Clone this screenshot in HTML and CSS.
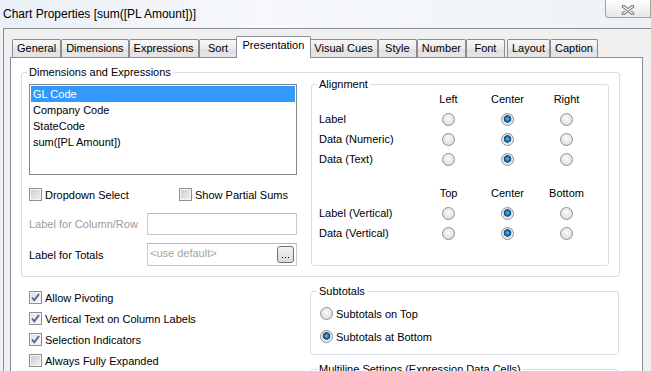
FILE: index.html
```html
<!DOCTYPE html>
<html lang="en">
<head>
    <meta charset="UTF-8">
    <meta name="viewport" content="width=device-width, initial-scale=1.0">
    <title>Chart Properties</title>
    <link rel="stylesheet" href="styles.css">
</head>
<body>

    <!-- Window title -->
    <div class="titlebar">
        <span class="title">Chart Properties [sum([PL Amount])]</span>
        <button class="close-btn" aria-label="Close">
            <svg width="14" height="10" viewBox="0 0 14 10">
                <path d="M2.5 1.5 L11.5 8.5 M11.5 1.5 L2.5 8.5" stroke="#6e6e6e" stroke-width="3.4" stroke-linecap="round"/>
                <path d="M2.5 1.5 L11.5 8.5 M11.5 1.5 L2.5 8.5" stroke="#fff" stroke-width="1.5" stroke-linecap="round"/>
            </svg>
        </button>
    </div>

    <div class="dialog">

        <ul class="tabs">
            <li class="tab">General</li>
            <li class="tab">Dimensions</li>
            <li class="tab">Expressions</li>
            <li class="tab">Sort</li>
            <li class="tab active">Presentation</li>
            <li class="tab">Visual Cues</li>
            <li class="tab">Style</li>
            <li class="tab">Number</li>
            <li class="tab">Font</li>
            <li class="tab tab-gap">Layout</li>
            <li class="tab">Caption</li>
        </ul>

        <div class="tab-panel">

            <!-- Dimensions and Expressions -->
            <fieldset class="group main-group">
                <legend>Dimensions and Expressions</legend>
                <div class="main-cols">
                    <div class="left-col">
                        <ul class="listbox">
                            <li class="selected">GL Code</li>
                            <li>Company Code</li>
                            <li>StateCode</li>
                            <li>sum([PL Amount])</li>
                        </ul>

                        <div class="check-row">
                            <label class="check wide"><span class="box"></span>Dropdown Select</label>
                            <label class="check"><span class="box"></span>Show Partial Sums</label>
                        </div>

                        <div class="field-row disabled">
                            <span class="field-label">Label for Column/Row</span>
                            <div class="textbox"></div>
                        </div>

                        <div class="field-row totals">
                            <span class="field-label">Label for Totals</span>
                            <div class="textbox">
                                <span class="placeholder">&lt;use default&gt;</span>
                                <span class="dots-btn"><i></i><i></i><i></i></span>
                            </div>
                        </div>
                    </div>

                    <fieldset class="group align-group">
                        <legend>Alignment</legend>
                        <div class="align-grid">
                            <span></span>
                            <span class="col-head">Left</span>
                            <span class="col-head">Center</span>
                            <span class="col-head">Right</span>

                            <span>Label</span>
                            <span class="radio"></span>
                            <span class="radio on"></span>
                            <span class="radio"></span>

                            <span>Data (Numeric)</span>
                            <span class="radio"></span>
                            <span class="radio on"></span>
                            <span class="radio"></span>

                            <span>Data (Text)</span>
                            <span class="radio"></span>
                            <span class="radio on"></span>
                            <span class="radio"></span>
                        </div>
                        <div class="align-grid">
                            <span></span>
                            <span class="col-head">Top</span>
                            <span class="col-head">Center</span>
                            <span class="col-head">Bottom</span>

                            <span>Label (Vertical)</span>
                            <span class="radio"></span>
                            <span class="radio on"></span>
                            <span class="radio"></span>

                            <span>Data (Vertical)</span>
                            <span class="radio"></span>
                            <span class="radio on"></span>
                            <span class="radio"></span>
                        </div>
                    </fieldset>
                </div>
            </fieldset>

            <div class="lower">
                <div class="options">
                    <label class="check"><span class="box checked"><svg width="11" height="11" viewBox="0 0 11 11"><path d="M2 5.5 L4.3 8.3 L9 2" fill="none" stroke="#4a5f93" stroke-width="1.8"/></svg></span>Allow Pivoting</label>
                    <label class="check"><span class="box checked"><svg width="11" height="11" viewBox="0 0 11 11"><path d="M2 5.5 L4.3 8.3 L9 2" fill="none" stroke="#4a5f93" stroke-width="1.8"/></svg></span>Vertical Text on Column Labels</label>
                    <label class="check"><span class="box checked"><svg width="11" height="11" viewBox="0 0 11 11"><path d="M2 5.5 L4.3 8.3 L9 2" fill="none" stroke="#4a5f93" stroke-width="1.8"/></svg></span>Selection Indicators</label>
                    <label class="check"><span class="box"></span>Always Fully Expanded</label>
                </div>

                <div class="lower-right">
                    <fieldset class="group subtotals">
                        <legend>Subtotals</legend>
                        <label class="radio-row"><span class="radio"></span>Subtotals on Top</label>
                        <label class="radio-row"><span class="radio on"></span>Subtotals at Bottom</label>
                    </fieldset>

                    <fieldset class="group multiline">
                        <legend>Multiline Settings (Expression Data Cells)</legend>
                    </fieldset>
                </div>
            </div>

        </div>
    </div>

</body>
</html>
```

FILE: styles.css
```css
* {
    box-sizing: border-box;
}
html, body {
    margin: 0;
    padding: 0;
}
body {
    width: 651px;
    height: 371px;
    overflow: hidden;
    background-color: #eef2f7;
    font-family: "Liberation Sans", Arial, sans-serif;
    font-size: 11px;
    color: #000;
}

/* title bar */
.titlebar {
    height: 28px;
    display: flex;
    align-items: flex-start;
    padding-left: 3px;
    background: linear-gradient(to right, #eaf0f7, #f6f8fb 40%, #eef2f8);
}
.title {
    font-size: 12px;
    line-height: 29px;
}
.close-btn {
    margin-left: auto;
    width: 46px;
    height: 18px;
    padding: 3px 0 0;
    border: 1px solid #a3a3a3;
    border-top: none;
    border-radius: 0 0 0 4px;
    background: linear-gradient(#fdfdfd, #e8e8e8);
    display: flex;
    justify-content: center;
    align-items: center;
}

/* dialog body */
.dialog {
    margin-left: 3px;
    height: 343px;
    border-left: 1px solid #8c8c8c;
    border-top: 1px solid #8c8c8c;
    background-color: #f0f0f0;
    padding: 7px 8px 0 6px;
}

/* tabs */
.tabs {
    list-style: none;
    margin: 0 0 0 2px;
    padding: 0;
    height: 21px;
    display: flex;
    align-items: flex-end;
    position: relative;
    z-index: 1;
}
.tab {
    height: 18px;
    min-width: 39px;
    padding: 0 4px;
    border: 1px solid #898c95;
    border-bottom: none;
    border-radius: 2px 2px 0 0;
    background: linear-gradient(#f7f7f7, #ececec 50%, #e0e0e0 51%, #e6e6e6);
    line-height: 17px;
    text-align: center;
    white-space: nowrap;
}
.tab.active {
    height: 22px;
    margin: 0 -2px -1px;
    padding: 0 6px;
    background: #fff;
    position: relative;
    z-index: 2;
}
.tab-gap {
    margin-left: 2px;
}
.tab-panel {
    height: 320px;
    border: 1px solid #898c95;
    background-color: #fff;
    padding: 0 22px 0 10px;
}

/* group boxes */
.group {
    margin: 0;
    padding: 0;
    min-width: 0;
    border: 1px solid #d5dfe5;
    border-radius: 3px;
}
.group legend {
    padding: 0 2px;
    margin-left: -2px;
    line-height: 13px;
}
.main-group {
    margin-top: 8px;
    padding: 0 9px 10px 7px;
}
.main-cols {
    display: flex;
    align-items: flex-start;
    gap: 14px;
}
.left-col {
    width: 268px;
    flex: none;
    margin-top: 5px;
}

/* list */
.listbox {
    list-style: none;
    margin: 0;
    height: 91px;
    padding: 1px;
    border: 1px solid #828790;
}
.listbox li {
    line-height: 16px;
    padding-left: 2px;
}
.listbox .selected {
    background-color: #3399ff;
    color: #fff;
}

/* checkboxes */
.check {
    display: flex;
    align-items: center;
    gap: 3px;
    white-space: nowrap;
}
.box {
    width: 13px;
    height: 13px;
    flex: none;
    border: 1px solid #8e8f8f;
    background: linear-gradient(135deg, #cbcbcb, #f1f1f1);
    box-shadow: inset 0 0 0 1px #f4f4f4;
    display: flex;
    align-items: center;
    justify-content: center;
}
.box.checked {
    background: linear-gradient(135deg, #dedede, #fafafa);
}
.check-row {
    display: flex;
    height: 13px;
    margin-top: 13px;
}
.check-row .wide {
    width: 150px;
}

/* text fields */
.field-row {
    display: flex;
    align-items: center;
    margin-top: 12px;
}
.field-label {
    width: 118px;
    flex: none;
}
.disabled .field-label {
    color: #9c9c9c;
}
.textbox {
    width: 150px;
    height: 22px;
    border: 1px solid #c9c9c9;
    border-top-color: #b8b8b8;
    display: flex;
    align-items: center;
    justify-content: space-between;
    padding: 0 2px 0 2px;
}
.totals {
    margin-top: 8px;
}
.totals .textbox {
    height: 23px;
}
.placeholder {
    color: #a3a3a3;
    margin-top: -3px;
}
.dots-btn {
    width: 17px;
    height: 17px;
    border: 1px solid #707070;
    border-radius: 3px;
    background: linear-gradient(#f4f4f4, #dadada);
    display: flex;
    justify-content: center;
    align-items: flex-end;
    gap: 2px;
    padding-bottom: 4px;
}
.dots-btn i {
    width: 1px;
    height: 1px;
    background: #000;
}

/* alignment */
.align-group {
    width: 298px;
    flex: none;
    margin-top: -1px;
    padding: 0 0 22px 7px;
}
.align-grid {
    display: grid;
    grid-template-columns: 100px repeat(3, 59px);
    grid-auto-rows: 20px;
    align-items: center;
    margin-top: -2px;
}
.align-grid + .align-grid {
    margin-top: 14px;
}
.col-head {
    text-align: center;
}
.align-grid .radio {
    justify-self: center;
}

/* radios */
.radio {
    width: 13px;
    height: 13px;
    flex: none;
    border-radius: 50%;
    border: 1px solid #8f9091;
    background: radial-gradient(circle at 50% 40%, #fbfbfb, #e4e4e4 60%, #d2d2d2);
}
.radio.on {
    background: radial-gradient(circle at 50% 45%, #7cc8f2 0, #2b83c3 1.6px, #11497c 3.4px, #dcdcdc 4.1px, #f3f3f3 5.5px);
}

/* lower part */
.lower {
    display: flex;
    align-items: flex-start;
}
.options {
    width: 289px;
    flex: none;
    padding: 10px 0 0 8px;
}
.options .check {
    height: 21px;
}
.lower-right {
    width: 309px;
    flex: none;
}
.subtotals {
    margin-top: 8px;
    padding: 4px 0 6px 8px;
}
.radio-row {
    display: flex;
    align-items: center;
    gap: 3px;
    height: 23px;
    padding-left: 1px;
}
.multiline {
    margin-top: 8px;
    padding: 0 0 30px 8px;
}
```
